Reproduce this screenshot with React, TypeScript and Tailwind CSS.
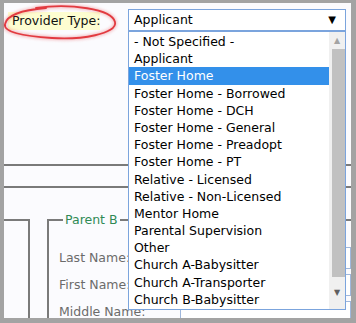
import React from "react";

const options = [
  "- Not Specified -",
  "Applicant",
  "Foster Home",
  "Foster Home - Borrowed",
  "Foster Home - DCH",
  "Foster Home - General",
  "Foster Home - Preadopt",
  "Foster Home - PT",
  "Relative - Licensed",
  "Relative - Non-Licensed",
  "Mentor Home",
  "Parental Supervision",
  "Other",
  "Church A-Babysitter",
  "Church A-Transporter",
  "Church B-Babysitter",
];

const font = { fontFamily: '"DejaVu Sans", Verdana, sans-serif' };

export default function App() {
  return (
    <div
      className="relative h-[323px] w-[356px] bg-[#a3a3a3] pb-[5px] pl-[4px] pr-[5px] pt-[3px] text-[12.5px]"
      style={font}
    >
      <div className="relative h-full overflow-hidden bg-[#fbfbfe]">
        {/* provider type row */}
        <div className="mt-[6px] flex items-start">
          <div className="ml-[4px] mt-[3px] h-[18px] w-[92px] whitespace-nowrap bg-[#fdfdd0] pl-[4px] leading-[18px] text-[#111]">
            Provider Type:
          </div>
          <div className="ml-[28px] flex h-[22px] w-[218px] items-center justify-between border border-[#7ba4dd] bg-white pl-[5px] pr-[9px] text-black">
            <span>Applicant</span>
            <span className="text-[10px] leading-none">▼</span>
          </div>
        </div>

        {/* section rules */}
        <div className="mt-[133px] h-[2px] w-full bg-[#7a7a7a]" />
        <div className="mt-[20px] h-[2px] w-full bg-[#7a7a7a]" />

        {/* fieldsets */}
        <div className="mt-[31px] flex">
          <div className="h-[120px] w-[26px] border-r-2 border-t-2 border-[#7a7a7a]" />
          <div className="ml-[17px] flex-1 border-l-2 border-t-2 border-[#7a7a7a]">
            <div className="relative -mt-[9px] ml-[14px] w-fit bg-[#fbfbfe] px-[2px] leading-[16px] text-[#2f8a55]">
              Parent B
            </div>
            <div className="ml-[10px] mt-[19px] flex flex-col gap-[5px] text-[#6b6b6b]">
              <div className="flex items-center">
                <span className="w-[121px]">Last Name:</span>
                <div className="h-[22px] flex-1 border border-[#9fb7dc] bg-white" />
              </div>
              <div className="flex items-center">
                <span className="w-[121px]">First Name:</span>
                <div className="h-[22px] flex-1 border border-[#9fb7dc] bg-white" />
              </div>
              <div className="flex items-center">
                <span className="w-[121px]">Middle Name:</span>
                <div className="h-[22px] flex-1 border border-[#9fb7dc] bg-white" />
              </div>
            </div>
          </div>
        </div>
      </div>

      {/* open dropdown list */}
      <div className="absolute left-[128px] top-[31px] flex h-[279px] w-[218px] border border-[#7ba4dd] bg-white">
        <ul className="flex-1 pt-[1px] text-black">
          {options.map((o) => (
            <li
              key={o}
              className={`h-[17.2px] whitespace-nowrap pl-[5px] leading-[17px] ${
                o === "Foster Home" ? "bg-[#3390ea] text-white" : ""
              }`}
            >
              {o}
            </li>
          ))}
        </ul>
        <div className="flex w-[16px] flex-col items-center bg-[#f0f0f0]">
          <div className="flex h-[17px] items-center justify-center text-[8px] text-[#a3a3a3]">▲</div>
          <div className="h-[228px] w-[13px] translate-x-[1px] bg-[#c1c1c1]" />
          <div className="flex flex-1 items-center justify-center text-[8px] text-[#606060]">▼</div>
        </div>
      </div>

      {/* red annotation ellipse */}
      <svg className="pointer-events-none absolute left-0 top-0" width="130" height="48" viewBox="0 0 130 48">
        <defs>
          <filter id="glow" x="-10%" y="-20%" width="120%" height="140%">
            <feGaussianBlur stdDeviation="1.4" />
          </filter>
        </defs>
        <g fill="none" stroke="#e23a40" strokeLinecap="round">
          <path
            d="M36 8 C70 3 112 9 115 22 C118 34 80 40 52 38 C22 36 3 32 5 24 C7 15 22 10 46 8"
            strokeWidth="4"
            opacity="0.3"
            filter="url(#glow)"
          />
          <path
            d="M36 8 C70 3 112 9 115 22 C118 34 80 40 52 38 C22 36 3 32 5 24 C7 15 22 10 46 8"
            strokeWidth="1.8"
          />
        </g>
      </svg>
    </div>
  );
}
